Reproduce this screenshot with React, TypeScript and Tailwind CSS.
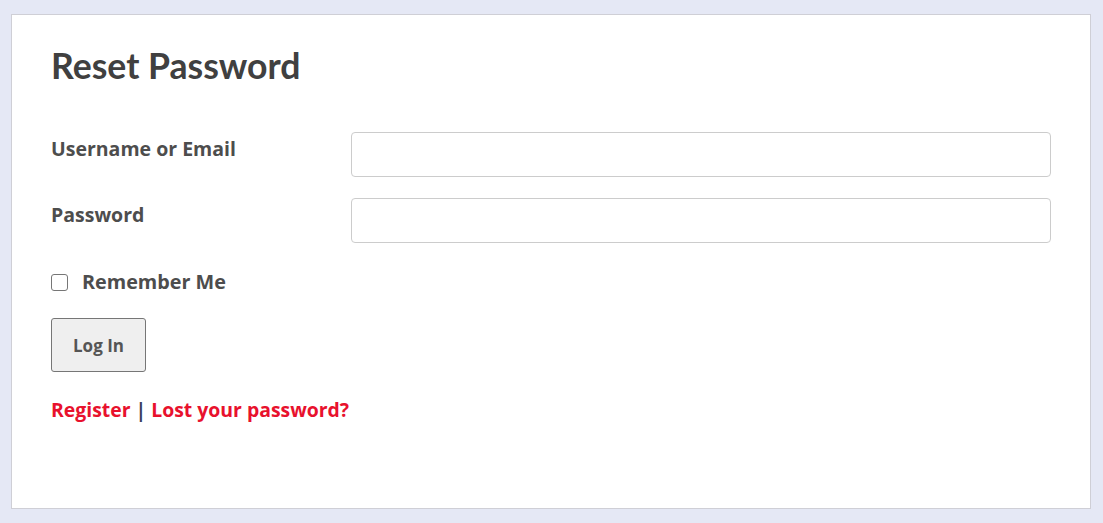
import React from 'react';

export default function App() {
  return (
    <div className="min-h-[523px] w-full bg-[#e5e8f5] pt-[14px] pl-[11px] pr-[12px] pb-[14px]" style={{ fontFamily: '"Open Sans", "Noto Sans", sans-serif' }}>
      <div className="h-[495px] border border-[#cfcfd6] bg-white px-[39px] pt-[31px]">
        <h1 className="text-[35.6px] font-bold leading-[40px] text-[#404040]" style={{ fontFamily: 'Lato, "Open Sans", sans-serif' }}>
          Reset Password
        </h1>

        <form className="mt-[46px]" onSubmit={(e) => e.preventDefault()}>
          <div className="flex items-start">
            <label className="w-[300px] pt-[4px] text-[19.5px] font-bold leading-[26px] text-[#4d4d4d]">Username or Email</label>
            <input type="text" className="h-[45px] flex-1 rounded-[4px] border border-[#cccccc] bg-white px-3 outline-none" />
          </div>
          <div className="mt-[21px] flex items-start">
            <label className="w-[300px] pt-[4px] text-[19.5px] font-bold leading-[26px] text-[#4d4d4d]">Password</label>
            <input type="password" className="h-[45px] flex-1 rounded-[4px] border border-[#cccccc] bg-white px-3 outline-none" />
          </div>

          <label className="mt-[26px] flex items-center">
            <span className="block h-[17px] w-[17px] rounded-[3px] border-[1.5px] border-[#767676] bg-white" />
            <span className="ml-[14px] text-[19.8px] font-bold leading-[26px] text-[#4d4d4d]">Remember Me</span>
          </label>

          <button type="submit" className="mt-[23px] h-[54px] w-[95px] rounded-[3px] border border-[#767676] bg-[#efefef] pt-[1px] text-[17px] font-bold text-[#555555]">
            Log In
          </button>

          <p className="mt-[25px] text-[19.4px] font-bold leading-[26px]">
            <a href="#" className="text-[#e8112d]">Register</a>
            <span className="text-[#3b3f5c]"> | </span>
            <a href="#" className="text-[#e8112d]">Lost your password?</a>
          </p>
        </form>
      </div>
    </div>
  );
}
